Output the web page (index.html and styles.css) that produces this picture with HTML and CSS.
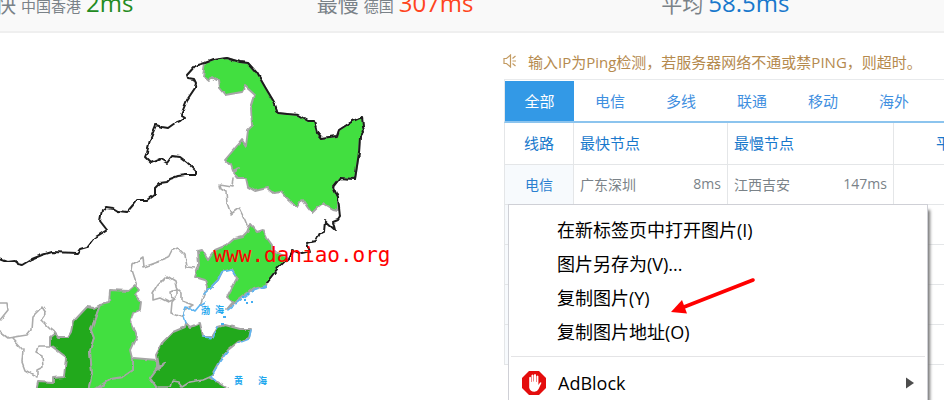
FILE: index.html
```html
<!DOCTYPE html>
<html lang="zh-CN">
<head>
<meta charset="utf-8">
<title>Ping 检测</title>
<link rel="stylesheet" href="styles.css">
</head>
<body>
<header class="stats">
  <div class="stat"><span class="stat-name">最快</span><span class="stat-place">中国香港</span><strong class="stat-value fast">2ms</strong></div>
  <div class="stat"><span class="stat-name">最慢</span><span class="stat-place">德国</span><strong class="stat-value slow">307ms</strong></div>
  <div class="stat"><span class="stat-name">平均</span><strong class="stat-value mean">58.5ms</strong></div>
</header>
<main class="content">
  <section class="map">
    <svg class="map-art" viewBox="0 33 480 355" width="480" height="355">
      <defs>
        <filter id="rough" x="0" y="0" width="480" height="400" filterUnits="userSpaceOnUse">
          <feTurbulence type="fractalNoise" baseFrequency="0.14" numOctaves="1" seed="4" result="n"/>
          <feDisplacementMap in="SourceGraphic" in2="n" scale="4" xChannelSelector="R" yChannelSelector="G"/>
          <feGaussianBlur stdDeviation="0.35"/>
        </filter>
      </defs>
      <g filter="url(#rough)" stroke-linejoin="round" stroke-linecap="round">
        <g stroke="#a5a5a5" stroke-width="1.9">
          <path fill="#43df40" d="M205 63L213 60 227 58 240 62 248 63 257 73 265 87 274 102 278 113 287 114 298 115 308 121 314 121 317 132 322 138 337 136 339 130 353 121 362 117 363 127 364 131 360 137 359 153 355 179 340 178 333 187 338 198 338 210 333 209 323 203 319 206 312 213 308 208 302 199 297 207 287 198 282 192 273 193 267 188 255 191 248 187 246 178 237 178 233 173 240 168 232 171 230 165 225 160 242 140 246 146 248 130 252 126 251 108 255 95 245 86 242 92 225 95 219 88 218 81 212 77 209 81 203 76Z"/>
          <path fill="#43df40" d="M250 224L257 232 263 230 267 238 272 245 272 250 288 258 278 268 267 282 266 286 253 289 242 297 227 309 233 302 227 297 237 278 232 269 222 272 218 280 208 290 205 280 195 277 199 265 198 251 202 250 208 260 215 250 227 245 235 238 243 236 247 232Z"/>
          <path fill="#23a91e" d="M100 305L94 308 87 307 73 322 71 332 68 337 58 337 55 333 50 337 50 345 66 357 64 377 53 378 53 383 38 382 36 392H88L92 373 90 350 94 338 91 330Z"/>
          <path fill="#43df40" d="M133 358L157 360 157 368 150 378 160 392H94L110 379 123 377 133 370Z"/>
          <path fill="#43df40" d="M100 305L109 303 110 290 128 291 135 285 139 290 135 295 141 302 140 310 133 313 131 320 137 337 131 350 133 358 133 370 123 377 110 379 97 388 88 392 92 373 90 350 94 338 91 330Z"/>
          <path fill="#23a91e" d="M186 323L190 327 200 323 203 337 212 337 218 327 225 325 240 329 251 329 249 338 238 342 228 350 220 360 210 378 227 388V392H160L150 378 158 367 156 355 163 342 173 332 185 327Z"/>
          <path fill="#a9a9a9" stroke-width=".8" d="M157 368L166 361 163 366 156 371Z"/>
        </g>
        <g fill="none" stroke="#ababab" stroke-width="1.6">
          <path d="M233 178L232 187 220 185 221 189 226 192 227 203 231 214 239 208 245 220 247 225"/>
          <path d="M137 285L132 270 133 264 143 257 144 267 158 262 168 258 172 250 178 248 185 255 187 267 195 268"/>
          <path d="M153 293L158 285 167 276 175 281 177 290 170 292 171 297 175 299 168 302 160 298 153 300Z"/>
          <path d="M177 288L182 293 182 301 193 305 184 310 182 317 171 313 172 302 177 296Z"/>
          <path d="M0 303L7 303 8 310 0 320M0 332L8 338 27 335 31 330 32 317 42 307 46 313 41 320 50 329 55 333"/>
          <path d="M12 338L23 350 22 362 25 370 37 377 37 370 43 367 42 356 36 353 38 346 50 346"/>
          <path d="M158 387L170 387 172 381 178 382 182 387 190 382 203 380 210 377"/>
          <path d="M200 305L205 292 208 290"/>
        </g>
        <g fill="none" stroke="#5eb5f2" stroke-width="1.6">
          <path d="M186 323L183 313 185 307 190 308 195 311 200 305 205 302M204 294L209 289 218 280 222 272 232 270 235 274"/>
          <path d="M203 337L213 338 218 327M251 330L249 339 238 343M228 351L220 361 211 377 216 381M228 310L243 298 253 290 266 286" stroke-dasharray="7 3"/>
        </g>
        <path fill="none" stroke="#1c1c1c" stroke-width="2" d="M-4 257L7 261 15 260 17 264 22 265 32 259 42 255 52 252 77 253 80 249 87 247 94 238 107 230 100 221 102 210 106 207 113 208 118 211 127 212 133 205 137 200 147 200 155 194 155 188 160 183 167 182 170 179 178 176 185 175 196 175 196 171 188 163 180 157 172 156 167 163 160 159 151 163 145 157 147 152 150 140 156 125 162 127 168 128 175 123 180 121 185 117 181 115 187 100 195 88 196 83 194 79 188 78 187 75 195 66 205 63 213 60 227 58 240 62 248 63 257 73 265 87 274 102 278 113 287 114 298 115 308 121 314 121 317 132 322 138 337 136 339 130 353 121 362 117 363 127 364 131 360 137 359 153 355 179 340 178 333 187 338 198 340 217 338 220 333 222 335 230 325 221 324 232 320 233 316 241 307 243 310 252 302 254 292 250 288 258 278 268 267 282"/>
      </g>
      <path fill="#45aef2" d="M242 296h2v2h-2zM244 299h2v2h-2zM247 293h2v2h-2zM251 301h2v2h-2zM246 302h2v2h-2zM223 316h3v2h-3zM221 323h3v2h-3z"/>
      <g class="sea"><text x="201" y="314">渤</text><text x="215" y="313">海</text><text x="234" y="384">黄</text><text x="258" y="384">海</text></g>
      <text class="watermark" x="302" y="262">www.daniao.org</text>
    </svg>
  </section>
  <section class="panel">
    <p class="notice">
      <svg class="speaker" viewBox="0 0 14 14" width="14" height="14" fill="none" stroke="#c39b62" stroke-width="1.2"><path d="M1 4.500h2.500L7.500 1v12L3.500 9.500H1zM9.500 7H13M9.500 4.500L12.500 2M9.500 9.500l3 2.500"/></svg>
      <span>输入IP为Ping检测，若服务器网络不通或禁PING，则超时。</span>
    </p>
    <nav class="tabs">
      <button class="tab active">全部</button><button class="tab">电信</button><button class="tab">多线</button><button class="tab">联通</button><button class="tab">移动</button><button class="tab">海外</button>
    </nav>
    <div class="table-clip">
      <table class="results">
        <colgroup><col class="c-line"><col class="c-fast"><col class="c-slow"><col class="c-mean"></colgroup>
        <thead><tr><th class="mid">线路</th><th>最快节点</th><th>最慢节点</th><th class="mid">平均</th></tr></thead>
        <tbody>
          <tr><td class="line">电信</td><td><div class="node"><span>广东深圳</span><span>8ms</span></div></td><td><div class="node"><span>江西吉安</span><span>147ms</span></div></td><td></td></tr>
          <tr><td class="line"></td><td></td><td></td><td></td></tr>
          <tr><td class="line"></td><td></td><td></td><td></td></tr>
          <tr><td class="line"></td><td></td><td></td><td></td></tr>
          <tr><td class="line"></td><td></td><td></td><td></td></tr>
        </tbody>
      </table>
    </div>
    <div class="menu" role="menu">
      <button class="item" role="menuitem">在新标签页中打开图片(I)</button>
      <button class="item" role="menuitem">图片另存为(V)...</button>
      <button class="item" role="menuitem">复制图片(Y)</button>
      <button class="item" role="menuitem">复制图片地址(O)</button>
      <hr class="rule">
      <button class="item ext" role="menuitem">
        <svg viewBox="0 0 24 24" width="24" height="24"><path fill="#e40d0d" d="M7 0h10l7 7v10l-7 7H7l-7-7V7z"/><path fill="#fff" d="M7.200 12V6.500q.9-1.400 1.800 0V11h.5V4.300q1-1.400 2 0V10.500h.5V3.800q1-1.400 2 0V11h.5V5.200q1-1.300 1.900 0V14l1.500-2.300q1.300-.9 1.500.3L16.600 18q-1.200 2.700-4.200 2.700-4.200 0-5.200-4z"/></svg>
        <span>AdBlock</span>
        <svg class="more" viewBox="0 0 8 12" width="8" height="12"><path fill="#4d4d4d" d="M0 0.500L8 6 0 11.500z"/></svg>
      </button>
    </div>
    <svg class="arrow" viewBox="0 0 86 38" width="86" height="38"><path d="M83 4L14 31" stroke="#f00" stroke-width="3.600" stroke-linecap="round"/><path fill="#f00" d="M1 36L12 24 17 37.500z"/></svg>
  </section>
</main>
</body>
</html>
```
FILE: styles.css
```css
* { box-sizing: border-box; }

body {
  margin: 0;
  height: 100vh;
  overflow: hidden;
  background: #fff;
  color: #7a8288;
  font-family: "Open Sans", "Noto Sans CJK SC", sans-serif;
  font-size: 15px;
}

button {
  border: 0;
  padding: 0;
  background: none;
  font: inherit;
}

/* The page is scrolled a little, so the bar is partly out of view */
.stats {
  display: grid;
  grid-template-columns: repeat(3, 1fr);
  margin: -24px 0 0;
  padding: 7px 0 8px;
  height: 57px;
  background: #f9f9f9;
  border-bottom: 2px solid #efefef;
}

.stat {
  display: flex;
  align-items: baseline;
  gap: 5px;
  margin-left: -26px;
  line-height: 40px;
  white-space: nowrap;
}

.stat:nth-child(2) { margin-left: 2px; }
.stat:nth-child(3) { margin-left: 32px; }
.stat-name { font-size: 21px; }
.stat-place { font-size: 15px; }
.stat-value { font-size: 24px; font-weight: 400; }
.fast { color: #228b22; }
.slow { color: #ff4420; }
.mean { color: #1878cc; }

.content {
  display: grid;
  grid-template-columns: minmax(0, 504fr) minmax(0, 440fr);
}

.map-art { display: block; }

.sea {
  fill: #1ea7ee;
  font-size: 9px;
  font-weight: 700;
}

.watermark {
  fill: #f00;
  font-family: "DejaVu Sans Mono", monospace;
  font-size: 21px;
  text-anchor: middle;
}

.panel { position: relative; min-width: 0; }

.notice {
  display: flex;
  align-items: center;
  gap: 11px;
  height: 46px;
  margin: 0 0 0 -1px;
  padding-top: 10px;
  color: #b58a4e;
  white-space: nowrap;
}

.tabs {
  display: flex;
  gap: 1px;
  height: 44px;
  border-top: 1px solid #e8eaec;
  border-left: 1px solid #e4e8ec;
  border-bottom: 2px solid #8cc4ee;
  padding-top: 1px;
}

.tab { width: 70px; padding-bottom: 2px; color: #3f8fe0; }
.tab.active { width: 69px; background: #3399e6; color: #fff; }

.table-clip { overflow: hidden; }

.results {
  width: 505px;
  table-layout: fixed;
  border-collapse: collapse;
}

.c-line { width: 69px; }
.c-fast { width: 154px; }
.c-slow { width: 166px; }

.results th,
.results td {
  height: 40px;
  padding: 0 6px;
  border: 1px solid #e4e6e8;
  text-align: left;
}

.results th { height: 41px; padding-bottom: 2px; border-top: 0; color: #1878cc; font-weight: 400; }
.results .mid { text-align: center; }
.results td { font-size: 14px; }
.results .line { background: #f7fafd; color: #2a7fd0; text-align: center; }
.node { display: flex; justify-content: space-between; }

.menu {
  position: absolute;
  top: 171px;
  left: 4px;
  width: 420px;
  padding: 7px 0;
  background: #fff;
  border: 1px solid #cfd0d6;
  box-shadow: 3px 5px 3px -1px #777;
  color: #000;
}

.item {
  display: flex;
  align-items: center;
  width: 100%;
  height: 34px;
  padding-left: 48px;
  color: #000;
  font-size: 18px;
}

.rule {
  margin: 8px 2px 9px;
  border: 0;
  border-top: 1px solid #e4e4e6;
}

.ext { gap: 12px; padding: 0 13px; }
.more { margin-left: auto; }

.arrow {
  position: absolute;
  top: 243px;
  left: 166px;
}
```
